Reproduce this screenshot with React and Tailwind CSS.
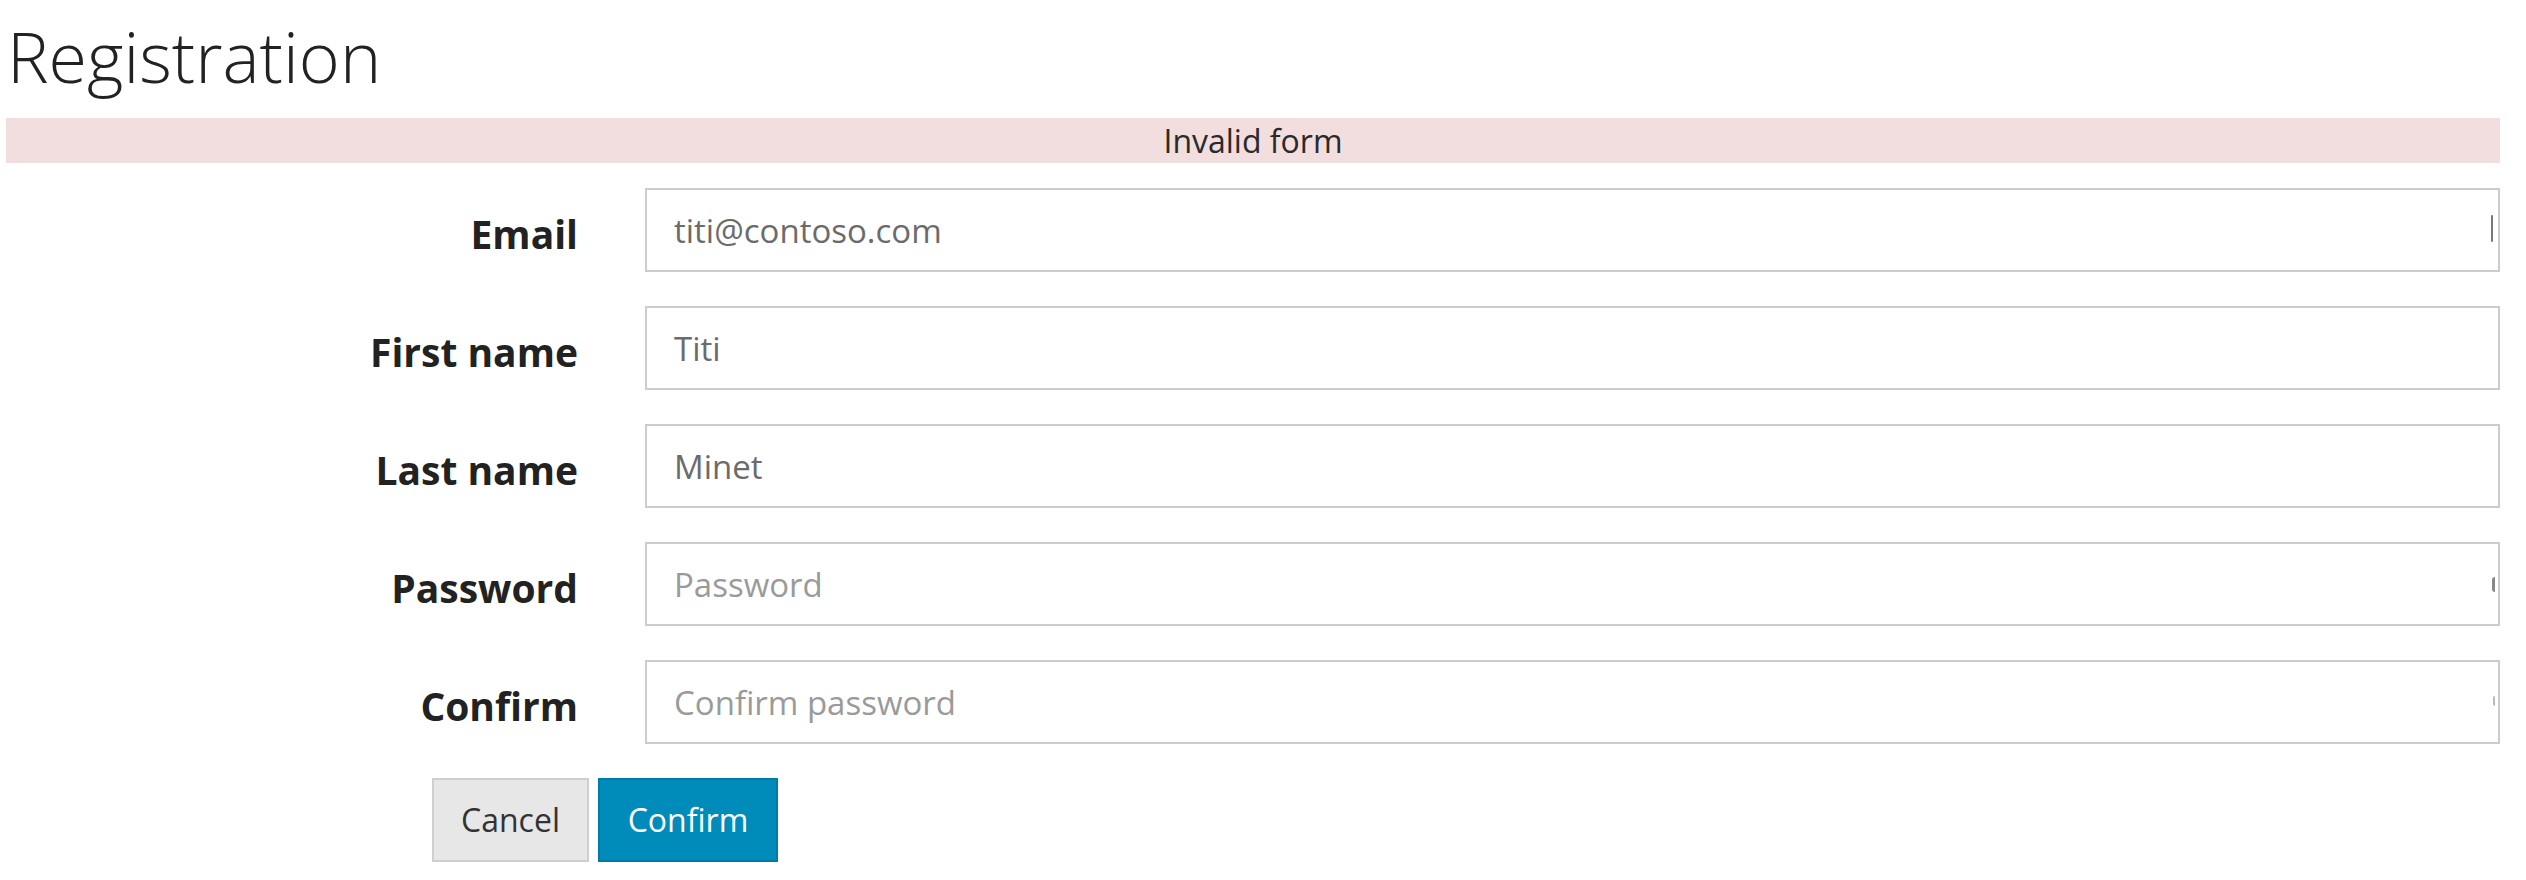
import React from "react";

const fields = [
  { label: "Email", value: "titi@contoso.com", type: "email", mark: "caret" },
  { label: "First name", value: "Titi", type: "text" },
  { label: "Last name", value: "Minet", type: "text" },
  { label: "Password", placeholder: "Password", type: "password", mark: "dot" },
  { label: "Confirm", placeholder: "Confirm password", type: "password", mark: "faint" },
];

const Field = ({ label, value, placeholder, type, mark }) => (
  <div className="flex h-[84px] items-start">
    <label className="w-[572px] shrink-0 pt-[19px] text-right text-[39px] font-bold leading-[54px] text-[#222]">
      {label}
    </label>
    <div className="relative ml-[67px] h-full flex-1">
      <input
        type={type === "password" ? "password" : "text"}
        readOnly
        value={value || ""}
        placeholder={placeholder}
        className="block h-full w-full border-2 border-[#cccccc] bg-white pl-[27px] text-[33px] text-[#6b6b6b] outline-none placeholder:text-[#9a9a9a]"
      />
      {mark === "caret" && <span className="absolute right-[7px] top-[27px] h-[27px] w-[2px] rounded-full bg-[#777]" />}
      {mark === "dot" && <span className="absolute right-[5px] top-[35px] h-[15px] w-[3px] rounded-l-full bg-[#888]" />}
      {mark === "faint" && <span className="absolute right-[5px] top-[36px] h-[10px] w-[2px] rounded-l-full bg-[#bbb]" />}
    </div>
  </div>
);

const App = () => {
  return (
    <div className="min-h-screen bg-white pl-[6px] font-['Open_Sans',sans-serif]">
      <div className="w-[2494px]">
        <h1 className="mt-[17px] pl-[1px] text-[70px] font-light leading-[78px] text-[#222]">Registration</h1>
        <div className="mt-[23px] flex h-[45px] items-center justify-center bg-[#f2dede] text-[32px] text-[#2a2a2a]">
          Invalid form
        </div>
        <form className="mt-[25px] flex flex-col gap-[34px]">
          {fields.map((f) => (
            <Field key={f.label} {...f} />
          ))}
          <div className="ml-[426px] flex gap-[9px]">
            <button type="button" className="h-[84px] w-[157px] border-2 border-[#cfcfcf] bg-[#e7e7e7] text-[32px] text-[#333]">
              Cancel
            </button>
            <button type="button" className="h-[84px] w-[180px] border-2 border-[#007ba6] bg-[#008cba] text-[32px] text-white">
              Confirm
            </button>
          </div>
        </form>
      </div>
    </div>
  );
};

export default App;
